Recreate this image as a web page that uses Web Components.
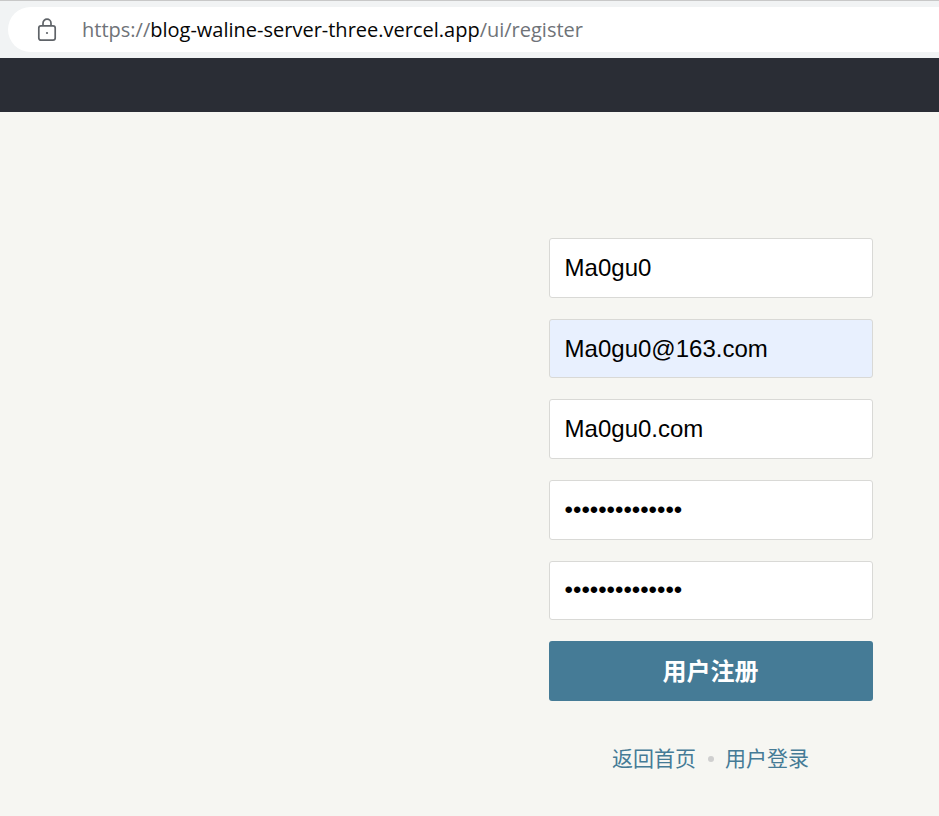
<!DOCTYPE html>
<html lang="zh">
<head>
<meta charset="utf-8">
<title>register</title>
<style>
	html, body {
		margin: 0;
		height: 100%;
	}

	body {
		background: #f6f6f2;
		overflow: hidden;
		font-family: "Liberation Sans", "Noto Sans CJK SC", sans-serif;
	}
</style>
</head>
<body>
<browser-bar><span class="host">blog-waline-server-three.vercel.app</span></browser-bar>
<top-header></top-header>
<register-page>
	<form-field>Ma0gu0</form-field>
	<form-field autofilled>Ma0gu0@163.com</form-field>
	<form-field>Ma0gu0.com</form-field>
	<form-field>••••••••••••••</form-field>
	<form-field>••••••••••••••</form-field>
	<form-button>用户注册</form-button>
	<form-links slot="links"></form-links>
</register-page>

<script>
class BrowserBar extends HTMLElement {
	constructor() {
		super();
		let root = this.attachShadow({mode: 'open'});
		root.innerHTML = `
			<style>
				:host {
					display: block;
					height: 58px;
					box-sizing: border-box;
					border-top: 1px solid #c8c8c8;
					background: #f1f3f4;
					padding: 6px 0 6px 8px;
				}

				#pill {
					display: flex;
					align-items: center;
					height: 45px;
					background: #fff;
					border-radius: 23px 0 0 23px;
					padding-left: 29px;
				}

				svg {
					flex: none;
					margin-right: 25px;
				}

				#url {
					font: 20px "Open Sans", sans-serif;
					color: #6f7378;
					white-space: nowrap;
				}

				::slotted(.host) {
					color: #050505;
				}
			</style>
			<div id="pill">
				<svg width="20" height="24" viewBox="0 0 20 24" fill="none" stroke="#5f6368" stroke-width="1.7">
					<rect x="1.8" y="7.8" width="16.4" height="14.4" rx="2.2"/>
					<path d="M6 7.5V5.2a4 4 0 0 1 8 0v2.3"/>
					<circle cx="10" cy="15" r="1.1" fill="#5f6368" stroke="none"/>
				</svg>
				<span id="url">https://<slot></slot>/ui/register</span>
			</div>`;
	}
}

class TopHeader extends HTMLElement {
	constructor() {
		super();
		let root = this.attachShadow({mode: 'open'});
		root.innerHTML = `
			<style>
				:host {
					display: block;
					height: 54px;
					background: #2a2d35;
				}
			</style>`;
	}
}

class RegisterPage extends HTMLElement {
	constructor() {
		super();
		let root = this.attachShadow({mode: 'open'});
		root.innerHTML = `
			<style>
				:host {
					display: flex;
					justify-content: flex-end;
					padding: 126.2px 66px 0 0;
				}

				#form {
					width: 324px;
					display: flex;
					flex-direction: column;
					gap: 21px;
				}

				#links {
					margin-top: 21px;
				}
			</style>
			<div id="form">
				<slot></slot>
				<div id="links"><slot name="links"></slot></div>
			</div>`;
	}
}

class FormField extends HTMLElement {
	constructor() {
		super();
		let root = this.attachShadow({mode: 'open'});
		root.innerHTML = `
			<style>
				:host {
					display: flex;
					align-items: center;
					height: 59.6px;
					box-sizing: border-box;
					padding: 0 14.6px;
					background: #fff;
					border: 1px solid #d9d9d6;
					border-radius: 3px;
					font: 24px "Liberation Sans", sans-serif;
					color: #000;
				}

				:host([autofilled]) {
					background: #e8f0fe;
				}
			</style>
			<slot></slot>`;
	}
}

class FormButton extends HTMLElement {
	constructor() {
		super();
		let root = this.attachShadow({mode: 'open'});
		root.innerHTML = `
			<style>
				:host {
					display: flex;
					align-items: center;
					justify-content: center;
					height: 59.6px;
					box-sizing: border-box;
					padding: 0 1px 3px 0;
					background: #457b96;
					border-radius: 3px;
					color: #fff;
					font: bold 24px "Liberation Sans", "Noto Sans CJK SC", sans-serif;
				}
			</style>
			<slot></slot>`;
	}
}

class FormLinks extends HTMLElement {
	constructor() {
		super();
		let root = this.attachShadow({mode: 'open'});
		root.innerHTML = `
			<style>
				:host {
					display: flex;
					align-items: center;
					justify-content: center;
					gap: 11.5px;
					padding-right: 1px;
					font: 21px/32px "Liberation Sans", "Noto Sans CJK SC", sans-serif;
				}

				a {
					color: #457b96;
					text-decoration: none;
				}

				i {
					width: 6px;
					height: 6px;
					border-radius: 50%;
					background: #cfcfcf;
				}
			</style>
			<a href="#">返回首页</a><i></i><a href="#">用户登录</a>`;
	}
}

window.customElements.define('browser-bar', BrowserBar);
window.customElements.define('top-header', TopHeader);
window.customElements.define('register-page', RegisterPage);
window.customElements.define('form-field', FormField);
window.customElements.define('form-button', FormButton);
window.customElements.define('form-links', FormLinks);
</script>
</body>
</html>
